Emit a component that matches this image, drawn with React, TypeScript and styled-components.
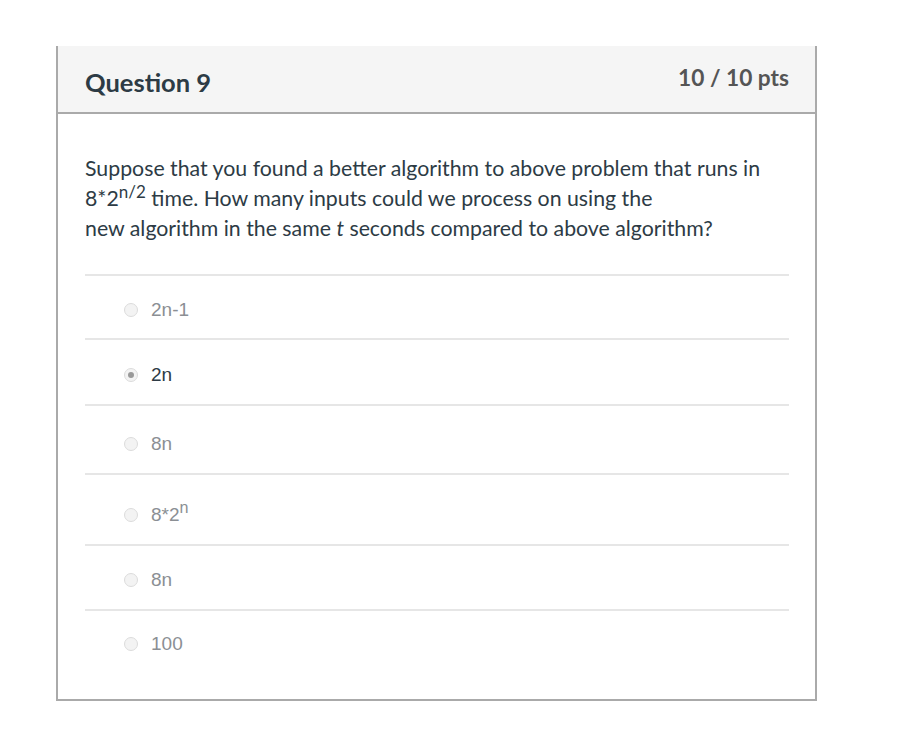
import React from "react";
import styled, { createGlobalStyle } from "styled-components";

const Global = createGlobalStyle`
  html, body { margin: 0; padding: 0; background: #ffffff; }
  body { font-family: Lato, "Noto Sans", sans-serif; color: #2d3b45; }
`;

const Page = styled.div`
  width: 908px;
  height: 742px;
  padding: 46px 0 0 56px;
  box-sizing: border-box;
`;

const Card = styled.section`
  width: 761px;
  border: 2px solid #aaaaaa;
  border-top: none;
  box-sizing: border-box;
  background: #fff;
`;

const Header = styled.header`
  height: 68px;
  box-sizing: border-box;
  background: #f5f5f5;
  border-bottom: 2px solid #aaaaaa;
  display: flex;
  justify-content: space-between;
  align-items: flex-start;
  padding: 0 26px 0 27px;
`;

const Title = styled.h2`
  margin: 21px 0 0 0;
  font-family: Lato, sans-serif;
  font-weight: 700;
  font-size: 25.5px;
  line-height: 30px;
  color: #2d3b45;
`;

const Points = styled.div`
  margin-top: 19px;
  font-family: Lato, sans-serif;
  font-weight: 700;
  font-size: 22.7px;
  line-height: 26px;
  color: #555555;
`;

const Body = styled.div`
  padding: 39px 26px 25px 27px;
`;

const QuestionText = styled.p`
  margin: 0 0 31px 0;
  font-family: Lato, sans-serif;
  font-size: 21.3px;
  line-height: 30px;
  color: #2d3b45;
  sup { font-size: 0.8em; line-height: 0; }
  em { font-style: italic; }
`;

const AnswerList = styled.ul`
  list-style: none;
  margin: 0;
  padding: 0;
`;

const Answer = styled.li<{ $h: number; $top: number }>`
  height: ${(p) => p.$h}px;
  box-sizing: border-box;
  border-top: 2px solid #e6e6e6;
  display: flex;
  align-items: flex-start;
  padding: ${(p) => p.$top}px 0 0 39px;
  gap: 13px;
`;

const Radio = styled.span<{ $checked: boolean }>`
  width: 14px;
  height: 14px;
  margin-top: 3px;
  border-radius: 50%;
  box-sizing: border-box;
  border: 1px solid #dcdcdc;
  background: #f3f3f3;
  display: flex;
  align-items: center;
  justify-content: center;
  flex: none;
  &::after {
    content: "";
    width: 6px;
    height: 6px;
    border-radius: 50%;
    background: ${(p) => (p.$checked ? "#999999" : "transparent")};
  }
`;

const Label = styled.span<{ $checked: boolean }>`
  font-family: "Liberation Sans", Arial, sans-serif;
  font-size: 19px;
  line-height: 20px;
  color: ${(p) => (p.$checked ? "#2d3b45" : "#8b8f94")};
  sup { font-size: 0.85em; line-height: 0; position: relative; top: -1px; }
`;

type Item = { label: React.ReactNode; checked?: boolean; h: number; top: number };

const answers: Item[] = [
  { label: "2n-1", h: 64, top: 24 },
  { label: "2n", checked: true, h: 66, top: 25 },
  { label: "8n", h: 69, top: 28 },
  { label: <>8*2<sup>n</sup></>, h: 71, top: 30 },
  { label: "8n", h: 65, top: 24 },
  { label: "100", h: 65, top: 23 },
];

export default function App() {
  return (
    <Page>
      <Global />
      <Card>
        <Header>
          <Title>Question 9</Title>
          <Points>10 / 10 pts</Points>
        </Header>
        <Body>
          <QuestionText>
            Suppose that you found a better algorithm to above problem that runs in
            <br />
            8*2<sup>n/2</sup> time. How many inputs could we process on using the
            <br />
            new algorithm in the same <em>t</em> seconds compared to above algorithm?
          </QuestionText>
          <AnswerList>
            {answers.map((a, i) => (
              <Answer key={i} $h={a.h} $top={a.top}>
                <Radio $checked={!!a.checked} />
                <Label $checked={!!a.checked}>{a.label}</Label>
              </Answer>
            ))}
          </AnswerList>
        </Body>
      </Card>
    </Page>
  );
}
